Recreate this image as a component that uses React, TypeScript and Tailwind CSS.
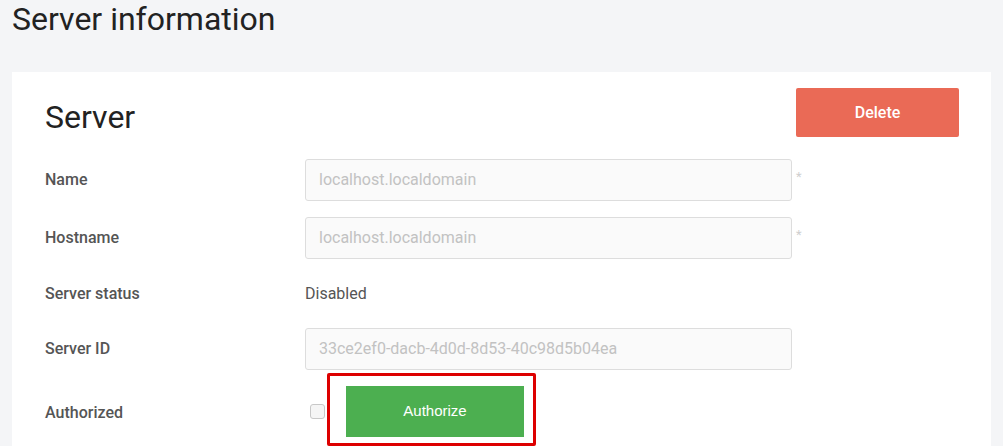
import React from "react";

function Row({ label, children, className = "" }: { label: string; children: React.ReactNode; className?: string }) {
  return (
    <div className={`flex items-center ${className}`}>
      <div className="w-[260px] shrink-0 text-[16px] font-medium text-[#555555]">{label}</div>
      <div className="flex flex-1 items-center">{children}</div>
    </div>
  );
}

function Field({ value, required }: { value: string; required?: boolean }) {
  return (
    <>
      <div className="flex h-[42px] w-[487px] items-center rounded-[3px] border border-[#dddddd] bg-[#fafafa] pl-[13px] text-[16px] text-[#c2c2c2]">
        {value}
      </div>
      {required && <span className="ml-[4px] -mt-[6px] text-[13px] text-[#cfcfcf]">*</span>}
    </>
  );
}

export default function App() {
  return (
    <div className="min-h-screen bg-[#f4f5f7] px-3 font-['Roboto',sans-serif]">
      <h1 className="text-[32px] leading-[38px] font-normal text-[#222222]">Server information</h1>
      <div className="mt-[34px] bg-white pl-[33px] pr-[32px] pt-[16px] pb-4">
        <div className="flex items-start justify-between">
          <h2 className="pt-[9px] text-[32px] leading-[40px] font-normal text-[#222222]">Server</h2>
          <button className="h-[49px] w-[163px] rounded-[2px] bg-[#ea6a56] text-[16px] font-medium text-white">
            Delete
          </button>
        </div>
        <Row label="Name" className="mt-[22px] h-[42px]">
          <Field value="localhost.localdomain" required />
        </Row>
        <Row label="Hostname" className="mt-[16px] h-[42px]">
          <Field value="localhost.localdomain" required />
        </Row>
        <Row label="Server status" className="mt-[14px] h-[42px]">
          <span className="text-[16px] text-[#555555]">Disabled</span>
        </Row>
        <Row label="Server ID" className="mt-[13px] h-[42px]">
          <Field value="33ce2ef0-dacb-4d0d-8d53-40c98d5b04ea" />
        </Row>
        <div className="mt-[3px] flex items-start">
          <div className="w-[260px] shrink-0 pt-[28px] text-[16px] font-medium text-[#555555]">Authorized</div>
          <div className="flex items-start">
            <div className="ml-[5px] mt-[31px] h-[15px] w-[15px] rounded-[3px] border border-[#c8c8c8] bg-[#f5f5f5]" />
            <div className="ml-[2px] rounded-[2px] border-[3px] border-[#dd0000] pl-[16px] pr-[9px] pt-[10px] pb-[6px]">
              <button className="h-[51px] w-[178px] bg-[#4caf50] font-['Liberation_Sans',sans-serif] text-[15px] text-white">
                Authorize
              </button>
            </div>
          </div>
        </div>
      </div>
    </div>
  );
}
